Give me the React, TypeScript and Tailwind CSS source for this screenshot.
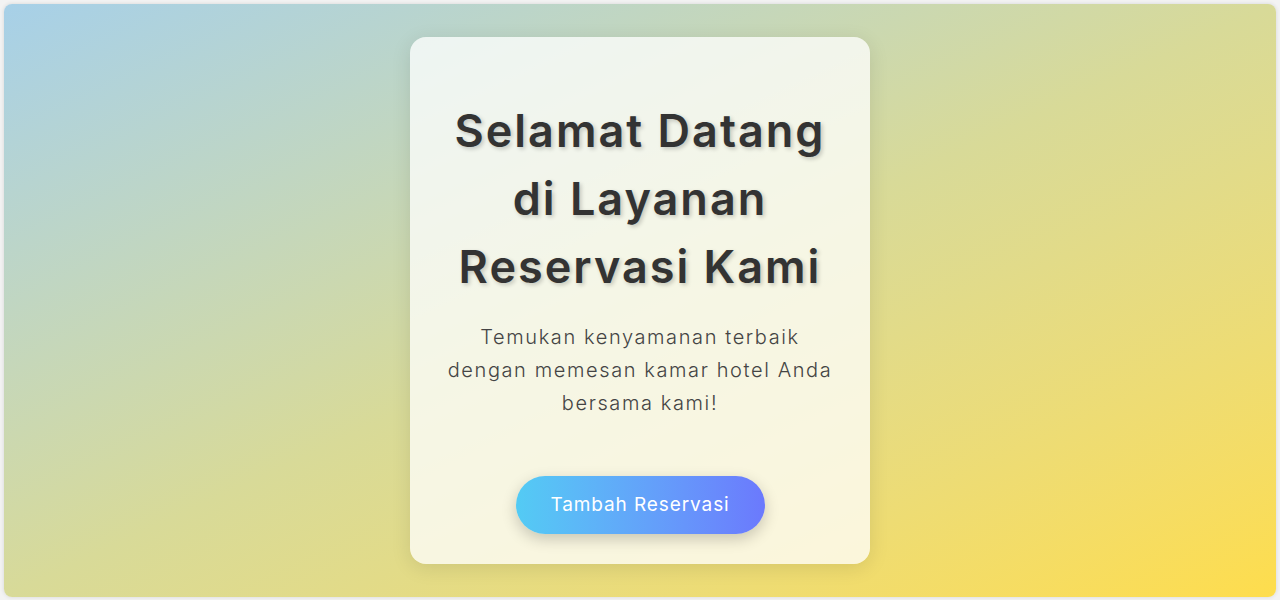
import React from "react";

const App = () => {
  return (
    <div className="h-screen w-full bg-[#f3f3f3] px-1 pt-1 pb-[3px] font-['Inter','Noto_Sans',sans-serif]">
      <div className="flex h-full w-full items-center justify-center rounded-lg bg-gradient-to-br from-[#a7d0e8] via-[#d8da98] to-[#fedd4c] shadow-[0_0_4px_rgba(0,0,0,0.12)]">
        {/* Welcome card */}
        <div className="flex w-[460px] flex-col items-center rounded-2xl bg-white/75 px-9 pt-[60px] pb-[30px] text-center shadow-[0_4px_20px_rgba(0,0,0,0.1)]">
          <h1 className="text-[45px] leading-[68px] font-semibold tracking-[2px] text-[#333] [text-shadow:2px_2px_4px_rgba(0,0,0,0.2)]">
            Selamat Datang
            <br />
            di Layanan
            <br />
            Reservasi Kami
          </h1>
          <p className="mt-[20px] text-[20px] leading-[33px] font-light tracking-[1.6px] whitespace-nowrap text-[#444]">
            Temukan kenyamanan terbaik
            <br />
            dengan memesan kamar hotel Anda
            <br />
            bersama kami!
          </p>
          <button className="mt-[56px] h-[58px] w-[249px] rounded-full bg-gradient-to-r from-[#53cbf4] to-[#6b79fd] text-[19px] font-normal tracking-[0.9px] text-white shadow-[0_5px_15px_rgba(0,0,0,0.2)]">
            Tambah Reservasi
          </button>
        </div>
      </div>
    </div>
  );
};

export default App;
